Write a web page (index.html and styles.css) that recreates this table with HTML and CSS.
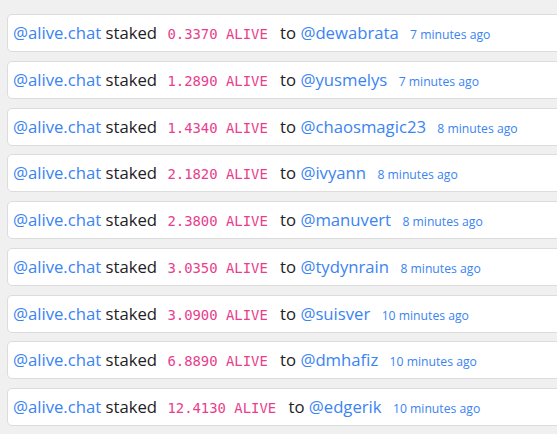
FILE: index.html
```html
<!DOCTYPE html>
<html>
<head>
<meta charset="utf-8">
<link rel="stylesheet" href="styles.css">
</head>
<body>
<div class="feed">
  <div class="item"><a class="user">@alive.chat</a> staked <code class="amt">0.3370 ALIVE</code> to <a class="user">@dewabrata</a> <span class="time">7 minutes ago</span></div>
  <div class="item"><a class="user">@alive.chat</a> staked <code class="amt">1.2890 ALIVE</code> to <a class="user">@yusmelys</a> <span class="time">7 minutes ago</span></div>
  <div class="item"><a class="user">@alive.chat</a> staked <code class="amt">1.4340 ALIVE</code> to <a class="user">@chaosmagic23</a> <span class="time">8 minutes ago</span></div>
  <div class="item"><a class="user">@alive.chat</a> staked <code class="amt">2.1820 ALIVE</code> to <a class="user">@ivyann</a> <span class="time">8 minutes ago</span></div>
  <div class="item"><a class="user">@alive.chat</a> staked <code class="amt">2.3800 ALIVE</code> to <a class="user">@manuvert</a> <span class="time">8 minutes ago</span></div>
  <div class="item"><a class="user">@alive.chat</a> staked <code class="amt">3.0350 ALIVE</code> to <a class="user">@tydynrain</a> <span class="time">8 minutes ago</span></div>
  <div class="item"><a class="user">@alive.chat</a> staked <code class="amt">3.0900 ALIVE</code> to <a class="user">@suisver</a> <span class="time">10 minutes ago</span></div>
  <div class="item"><a class="user">@alive.chat</a> staked <code class="amt">6.8890 ALIVE</code> to <a class="user">@dmhafiz</a> <span class="time">10 minutes ago</span></div>
  <div class="item"><a class="user">@alive.chat</a> staked <code class="amt">12.4130 ALIVE</code> to <a class="user">@edgerik</a> <span class="time">10 minutes ago</span></div>
</div>
</body>
</html>
```
FILE: styles.css
```css
html { overflow: hidden; }
body {
  margin: 0;
  background: #f0f0f0;
  font-family: "Open Sans", "Noto Sans", sans-serif;
  color: #1e2125;
}
.feed {
  width: 620px;
  padding: 14px 0 0 7px;
}
.item {
  box-sizing: border-box;
  height: 38px;
  margin-bottom: 8.75px;
  padding: 0 5px;
  background: #fff;
  border: 1px solid #dcdcdc;
  border-radius: 5px;
  font-size: 16.7px;
  line-height: 36px;
  white-space: nowrap;
}
.user { color: #3a84f2; }
.amt {
  font-family: "DejaVu Sans Mono", monospace;
  font-size: 13.9px;
  color: #e83e8c;
  margin: 0 8px 0 6px;
}
.time {
  font-size: 12.2px;
  color: #3a84f2;
  margin-left: 7px;
}
```
